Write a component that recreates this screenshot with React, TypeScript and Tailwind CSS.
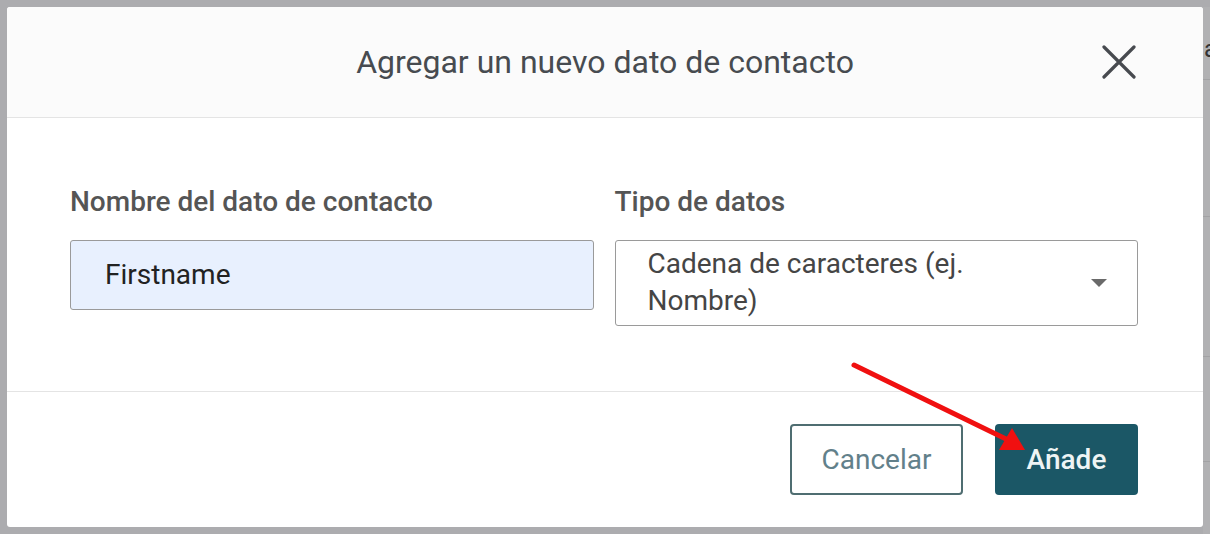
const font = { fontFamily: "Roboto, 'Noto Sans', sans-serif" };

function CloseButton() {
  return (
    <button className="absolute right-[66px] top-[37px] w-[36px] h-[36px] flex items-center justify-center text-[#474a4f]">
      <svg width={34} height={34} viewBox="0 0 34 34">
        <path d="M2 2 L32 32 M32 2 L2 32" stroke="currentColor" strokeWidth={3.2} strokeLinecap="round" />
      </svg>
    </button>
  );
}

function Field({ label, children }: { label: string; children: React.ReactNode }) {
  return (
    <div className="flex flex-col">
      <label className="text-[28px] leading-[32px] font-medium text-[#555555] mb-[22px]">
        {label}
      </label>
      {children}
    </div>
  );
}

function RedArrow() {
  // annotation drawn over the dialog
  return (
    <svg
      className="absolute inset-0 pointer-events-none"
      width={1210}
      height={534}
      viewBox="0 0 1210 534"
    >
      <line x1={854} y1={365} x2={1006} y2={439} stroke="#f01010" strokeWidth={5} strokeLinecap="round" />
      <polygon points="1025,450 999,450 1012,428" fill="#f01010" />
    </svg>
  );
}

export default function App() {
  return (
    <div
      className="relative w-[1210px] h-[534px] bg-[#acacaf] flex pt-[7px] pl-[7px] overflow-hidden"
      style={font}
    >
      <div className="w-[1196px] h-[520px] bg-white rounded-[3px] flex flex-col shrink-0">
        <div className="relative h-[111px] bg-[#fbfbfb] border-b border-[#e4e4e4] rounded-t-[3px] flex items-center justify-center">
          <h2 className="text-[32px] text-[#474b50]">
            Agregar un nuevo dato de contacto
          </h2>
          <CloseButton />
        </div>

        <div className="grid grid-cols-2 gap-[21px] items-start pt-[68px] pb-[65px] pl-[63px] pr-[65px] border-b border-[#e4e4e4]">
          <Field label="Nombre del dato de contacto">
            <div className="h-[70px] bg-[#e8f0fe] border border-[#9a9a9a] rounded-[3px] flex items-center pl-[34px] text-[28px] text-[#222222]">
              Firstname
            </div>
          </Field>
          <Field label="Tipo de datos">
            <div className="h-[86px] bg-white border border-[#9a9a9a] rounded-[3px] flex items-start pl-[32px] pr-[30px] pt-[4px]">
              <span className="text-[28px] leading-[37px] text-[#454545] flex-1">
                Cadena de caracteres (ej.
                <br />
                Nombre)
              </span>
              <span className="mt-[34px] w-0 h-0 border-l-[8px] border-r-[8px] border-t-[8px] border-l-transparent border-r-transparent border-t-[#6a6a6a]" />
            </div>
          </Field>
        </div>

        <div className="flex justify-end gap-[32px] pt-[32px] pr-[65px]">
          <button className="w-[173px] h-[71px] border-2 border-[#4f6d71] rounded-[4px] text-[28px] text-[#62808a] bg-white">
            Cancelar
          </button>
          <button className="w-[143px] h-[71px] rounded-[4px] bg-[#1b5766] text-[28px] text-[#eef4f4] font-medium">
            Añade
          </button>
        </div>
      </div>

      <div className="flex-1 bg-[#b1b1b3] flex flex-col">
        <div className="h-[73px] border-b border-[#a2a2a4] text-[24px] text-[#333] pl-[1px] pt-[30px] leading-[24px]">
          a
        </div>
        <div className="h-[137px] border-b border-[#a2a2a4]" />
        <div className="h-[140px] border-b border-[#a2a2a4]" />
        <div className="h-[105px] border-b border-[#a2a2a4]" />
      </div>

      <RedArrow />
    </div>
  );
}
